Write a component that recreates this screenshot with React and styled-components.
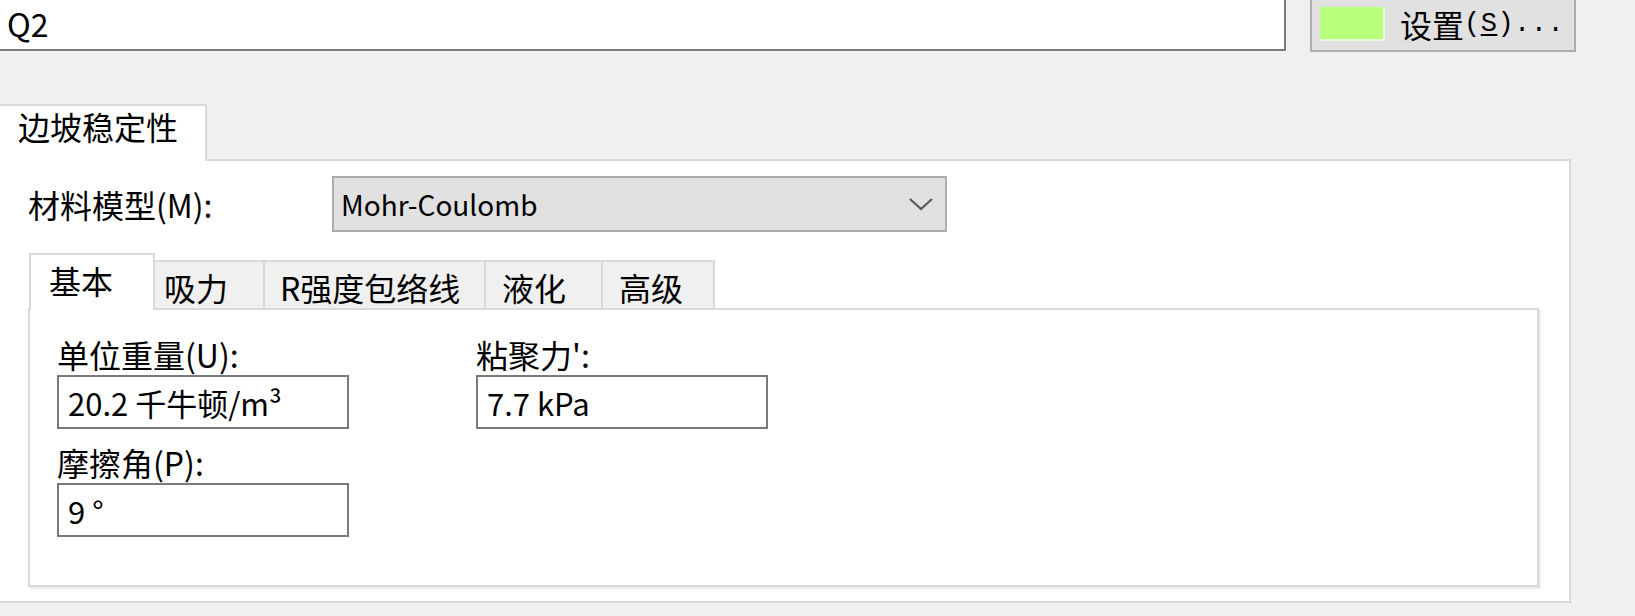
import React from 'react';
import styled, { createGlobalStyle } from 'styled-components';

const GlobalStyle = createGlobalStyle`
  html, body {
    margin: 0;
    padding: 0;
    background: #f0f0f0;
  }
  body {
    font-family: "Noto Sans CJK SC", "Noto Sans", sans-serif;
    color: #000;
  }
  * { box-sizing: border-box; }
`;

const Page = styled.div`
    width: 1635px;
    height: 616px;
    overflow: hidden;
    background: #f0f0f0;
    display: flex;
    flex-direction: column;
    font-size: 32px;
`;

const TopRow = styled.div`
    display: flex;
    align-items: flex-end;
    height: 57px;
    margin-top: -5px;
    margin-left: -3px;
`;

const NameField = styled.div`
    width: 1289px;
    height: 54px;
    margin-bottom: 1px;
    background: #fff;
    border: 2px solid #7a7a7a;
    padding: 0 0 3px 8px;
    display: flex;
    align-items: center;
    font-size: 32px;
`;

const SetButton = styled.button`
    margin-left: 24px;
    width: 266px;
    height: 57px;
    align-self: stretch;
    background: #e1e1e1;
    border: 2px solid #adadad;
    padding: 0 0 0 8px;
    display: flex;
    align-items: center;
    font-family: inherit;
    font-size: 32px;
    color: #000;
`;

const Swatch = styled.span`
    width: 65px;
    height: 34px;
    background: ${props => props.color};
    border-right: 2px solid #e6ffd8;
    border-bottom: 2px solid #e6ffd8;
    margin-right: 15px;
`;

const Mnemonic = styled.span`
    font-family: "Liberation Mono", monospace;
    font-size: 27px;
    letter-spacing: 0.5px;
    u { text-underline-offset: 3px; }
`;

const OuterTab = styled.div`
    margin-top: 52px;
    width: 207px;
    height: 57px;
    margin-bottom: -2px;
    background: #fff;
    border-top: 2px solid #d9d9d9;
    border-right: 2px solid #d9d9d9;
    padding: 0 0 0 18px;
    line-height: 40px;
    position: relative;
    z-index: 1;
`;

const OuterPanel = styled.div`
    margin-left: -3px;
    width: 1574px;
    height: 444px;
    background: #fff;
    border: 2px solid #d9d9d9;
    padding: 15px 30px 14px 29px;
    display: flex;
    flex-direction: column;
`;

const ModelRow = styled.div`
    display: flex;
    align-items: center;
    height: 56px;
`;

const RowLabel = styled.div`
    flex: 0 0 304px;
    line-height: 40px;
`;

const Dropdown = styled.div`
    width: 615px;
    height: 56px;
    background: #e1e1e1;
    border: 2px solid #adadad;
    padding: 0 12px 0 7px;
    display: flex;
    align-items: center;
    justify-content: space-between;
    font-size: 28px;
`;

const TabStrip = styled.div`
    margin-top: 21px;
    margin-left: 1px;
    height: 57px;
    display: flex;
    align-items: flex-end;
`;

const Tab = styled.div`
    width: ${props => props.w}px;
    height: ${props => props.active ? 57 : 50}px;
    padding: 5px 0 0 ${props => props.pad}px;
    line-height: 40px;
    background: ${props => props.active ? '#fff' : '#f0f0f0'};
    border-top: 2px solid #d9d9d9;
    border-right: 2px solid #d9d9d9;
    border-left: ${props => props.active ? '2px solid #d9d9d9' : 'none'};
    white-space: nowrap;
    ${props => props.active && 'position: relative; z-index: 2;'}
`;

const InnerPanel = styled.div`
    position: relative;
    z-index: 1;
    margin-top: -2px;
    width: 1511px;
    height: 279px;
    background: #fff;
    border: 2px solid #d9d9d9;
    box-shadow: 2px 2px 0 #ececec;
    padding: 24px 0 0 27px;
    display: grid;
    grid-template-columns: 292px 292px;
    column-gap: 127px;
    row-gap: 13px;
    align-content: start;
`;

const Field = styled.div`
    display: flex;
    flex-direction: column;
`;

const FieldLabel = styled.div`
    height: 41px;
    line-height: 41px;
    white-space: nowrap;
`;

const ValueBox = styled.div`
    height: 54px;
    background: #fff;
    border: 2px solid #7a7a7a;
    padding-left: 9px;
    display: flex;
    align-items: center;
    white-space: nowrap;
    font-size: 31px;
`;

const Chevron = () => (
    <svg width="24" height="14" viewBox="0 0 24 14">
        <polyline points="1,2 12,12 23,2" fill="none" stroke="#5a5a5a" strokeWidth="2.2" />
    </svg>
);

const tabs = [
    { text: '基本', w: 126, pad: 18, active: true },
    { text: '吸力', w: 110, pad: 9 },
    { text: 'R强度包络线', w: 221, pad: 15 },
    { text: '液化', w: 117, pad: 16 },
    { text: '高级', w: 112, pad: 16 },
];

const App = () => {
    return <Page>
        <GlobalStyle />
        <TopRow>
            <NameField>Q2</NameField>
            <SetButton>
                <Swatch color="#b8ff7c" />
                设置<Mnemonic>(<u>S</u>)...</Mnemonic>
            </SetButton>
        </TopRow>
        <OuterTab>边坡稳定性</OuterTab>
        <OuterPanel>
            <ModelRow>
                <RowLabel>材料模型(M):</RowLabel>
                <Dropdown>
                    <span>Mohr-Coulomb</span>
                    <Chevron />
                </Dropdown>
            </ModelRow>
            <TabStrip>
                {tabs.map(t => (
                    <Tab key={t.text} w={t.w} pad={t.pad} active={t.active}>{t.text}</Tab>
                ))}
            </TabStrip>
            <InnerPanel>
                <Field>
                    <FieldLabel>单位重量(U):</FieldLabel>
                    <ValueBox>20.2 千牛顿/m³</ValueBox>
                </Field>
                <Field>
                    <FieldLabel>粘聚力':</FieldLabel>
                    <ValueBox>7.7 kPa</ValueBox>
                </Field>
                <Field>
                    <FieldLabel>摩擦角(P):</FieldLabel>
                    <ValueBox>9 °</ValueBox>
                </Field>
            </InnerPanel>
        </OuterPanel>
    </Page>
}

export default App;
